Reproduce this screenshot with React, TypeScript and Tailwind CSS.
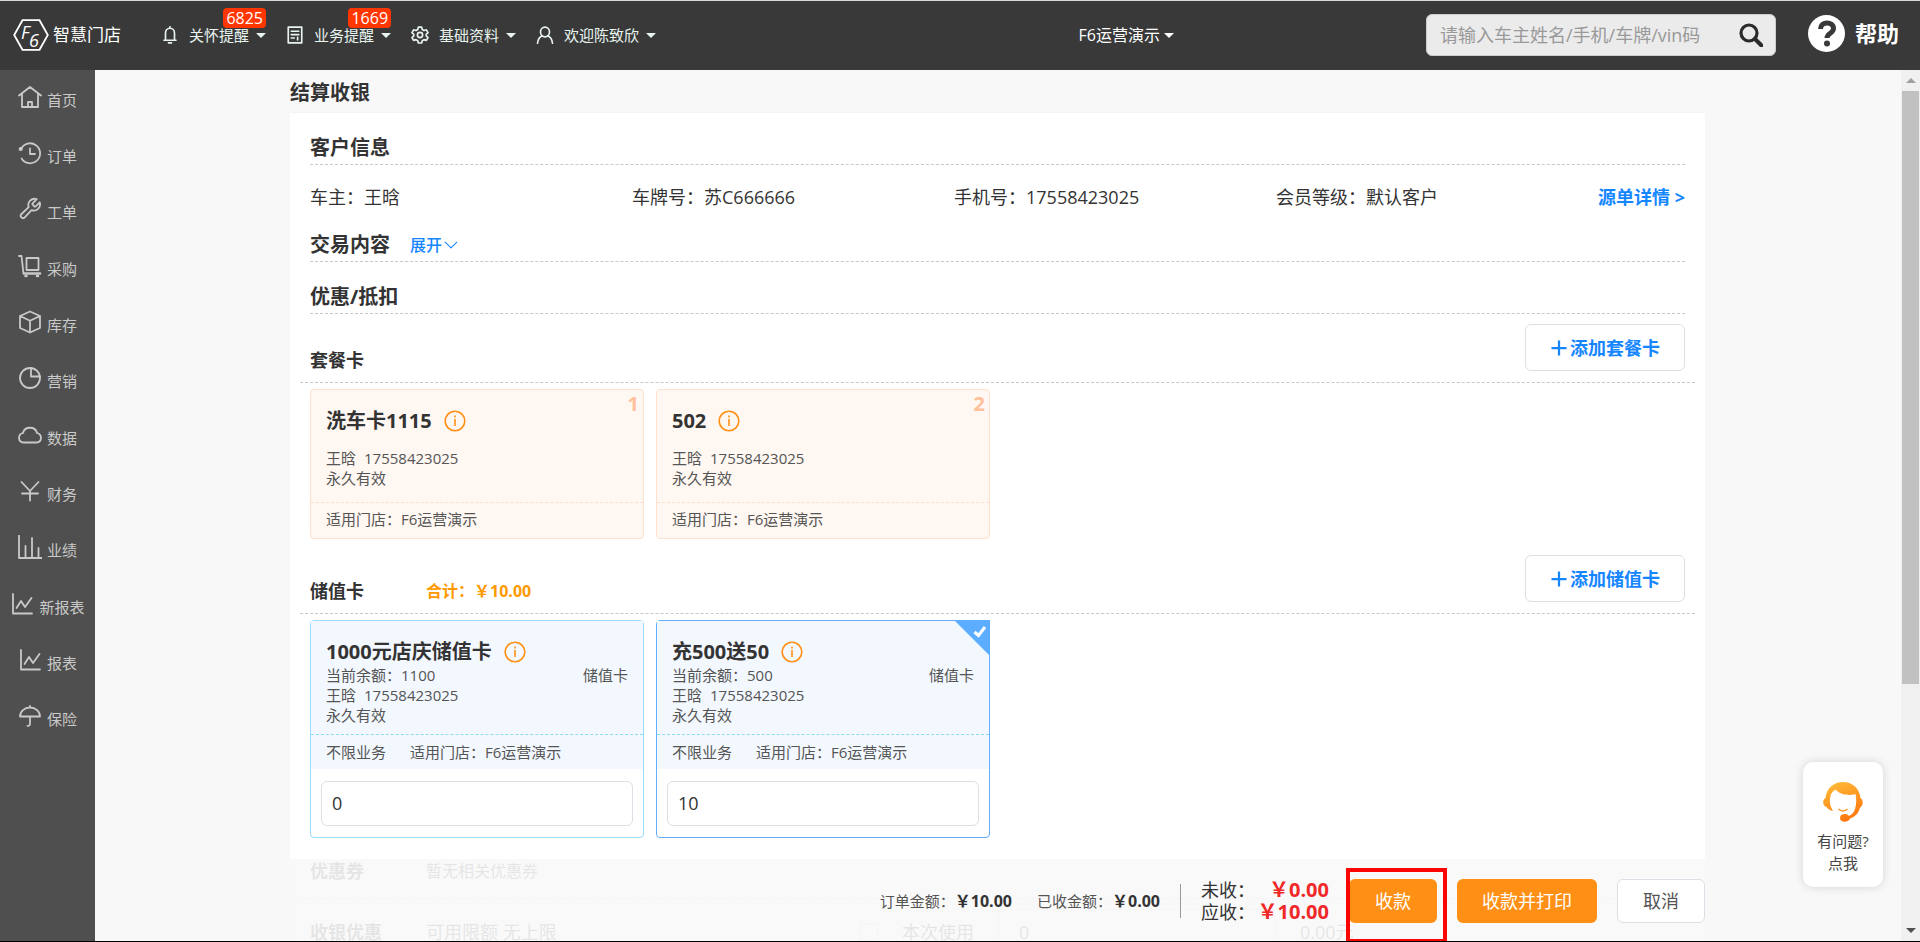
import { useState } from "react";
import type { ReactNode } from "react";

type IconProps = { children: ReactNode; className?: string; width?: number };

function Icon({ children, className = "size-6", width = 1.8 }: IconProps) {
  return (
    <svg
      viewBox="0 0 24 24"
      className={className}
      fill="none"
      stroke="currentColor"
      strokeWidth={width}
      strokeLinejoin="round"
      strokeLinecap="round"
      aria-hidden="true"
    >
      {children}
    </svg>
  );
}

const lineChart = <path d="M3 2v19.500h19M6.500 16l4.500-7 4 6 6.500-9" />;

const MENU = [
  { label: "首页", icon: <path d="M1 10.500 12 2l11 8.500M4 8.500V22h16V8.500M10 22v-5h4v5" /> },
  {
    label: "订单",
    icon: (
      <>
        <path d="M3 8.200A10 10 0 1 1 3.600 17.500M12 7.500V13h5" />
        <circle cx="2.700" cy="8" r="1.200" fill="currentColor" />
      </>
    ),
  },
  {
    label: "工单",
    icon: (
      <path d="M14.700 6.300a1 1 0 0 0 0 1.400l1.600 1.600a1 1 0 0 0 1.400 0l4-4a6.200 6.200 0 0 1-8.200 7.800L6.300 20.800a2.400 2.400 0 0 1-3.300-3.300l7.700-7.300a6.200 6.200 0 0 1 8-8z" />
    ),
  },
  {
    label: "采购",
    icon: (
      <>
        <path d="M1 2h2.500L5.500 19.500M8.500 4h12v12h-12z" />
        <path d="M6 19.500h16" strokeWidth="2.500" />
        <path d="M7.500 22h1M19 22h1" strokeWidth="2.500" />
      </>
    ),
  },
  { label: "库存", icon: <path d="M12 1.500 22 6v12l-10 4.500L2 18V6zM2 6l10 4.800L22 6M12 10.800v11.700" /> },
  {
    label: "营销",
    icon: (
      <>
        <circle cx="12" cy="12" r="10" />
        <path d="M13 2v8.500h9" />
      </>
    ),
  },
  {
    label: "数据",
    icon: <path d="M6.500 19.500c-7 0-7-8-1.500-9.500C6.500 3 17.500 3 19 10c5.500 1.500 5.500 9.500-1.500 9.500z" />,
  },
  { label: "财务", icon: <path d="m3.500 3 8.500 9 8.500-9M12 12v9.500M4 14.500h16" /> },
  { label: "业绩", icon: <path d="M1 0v23h23M7.500 11v12M14 3v20M20.500 13v10" /> },
  { label: "新报表", icon: lineChart },
  { label: "报表", icon: lineChart },
  {
    label: "保险",
    icon: <path d="M2 12.500a10 9 0 0 1 20 0zM12 2v1.500M12 12.500V20c0 1.500-1 2-2.500 1.800" />,
  },
];

const NAV = [
  {
    label: "关怀提醒",
    badge: "6825",
    icon: <path d="M6 19V9.500a6 6.500 0 0 1 12 0V19M4 19h16M12 1v2M10 22.500h4" />,
  },
  {
    label: "业务提醒",
    badge: "1669",
    icon: <path d="M3 1.500h18v21H3zM7 7h10M7 11.500h10M7 16h4M15.500 15v3.500" />,
  },
  {
    label: "基础资料",
    icon: (
      <>
        <circle cx="12" cy="12" r="3.500" />
        <path d="M9.800 1.500h4.400l.8 3.200 2.300 1.400 3.200-1 2.200 3.800-2.400 2.200v2.100l2.400 2.200-2.200 3.800-3.200-1-2.300 1.400-.8 3.100H9.800L9 19.600l-2.300-1.400-3.200 1-2.200-3.800 2.400-2.200v-2.100L1.300 8.900l2.200-3.800 3.200 1L9 4.700z" />
      </>
    ),
  },
  {
    label: "欢迎陈致欣",
    icon: (
      <>
        <ellipse cx="12" cy="8" rx="6" ry="6.500" />
        <path d="M2 23c.5-5 3-8.500 6.500-10M22 23c-.5-5-3-8.500-6.500-10" />
      </>
    ),
  },
];

function Caret() {
  return <span className="border-x-5 border-t-5 border-x-transparent border-t-current" />;
}

function Header() {
  return (
    <header className="flex h-[70px] shrink-0 items-center border-t border-[#d5d8dc] bg-[#393939] pr-[21px] pb-px pl-[13px] text-[#e8f4f0]">
      <a href="#" className="flex items-center gap-1 text-white">
        <svg viewBox="0 0 36 32" className="h-8 w-9" aria-hidden="true">
          <path
            d="M9.500 1.200h17L34.800 16l-8.300 14.800h-17L1.200 16z"
            fill="none"
            stroke="currentColor"
            strokeWidth="1.800"
          />
          <text x="8" y="20" fontSize="18" fontStyle="italic" fontWeight="500" fill="currentColor">
            F
          </text>
          <text x="16" y="28" fontSize="18" fontStyle="italic" fontWeight="500" fill="currentColor">
            6
          </text>
        </svg>
        <span className="text-[17px] leading-6">智慧门店</span>
      </a>

      <nav className="ml-10 flex items-center gap-5">
        {NAV.map((item) => (
          <button key={item.label} className="relative flex items-center text-[15px] leading-5 whitespace-nowrap">
            <Icon className="mr-[10px] size-[18px]" width={2.2}>
              {item.icon}
            </Icon>
            {item.label}
            <span className="ml-[7px] flex">
              <Caret />
            </span>
            {item.badge && (
              <span className="absolute right-0 bottom-full -mb-[3px] rounded-sm bg-[#ff3600] px-[3px] text-base leading-5 text-white">
                {item.badge}
              </span>
            )}
          </button>
        ))}
      </nav>

      <button className="mr-[252px] ml-auto flex items-center gap-1 text-base whitespace-nowrap text-white">
        F6运营演示
        <Caret />
      </button>

      <form className="flex h-[42px] w-[350px] items-center rounded-md border border-[#ccc] bg-[#ebebeb] pr-3 pl-[13px]">
        <input
          aria-label="搜索车主"
          placeholder="请输入车主姓名/手机/车牌/vin码"
          className="min-w-0 flex-1 bg-transparent text-lg outline-none placeholder:text-[#999]"
        />
        <button type="button" aria-label="搜索" className="text-[#2b2b2b]">
          <Icon width={3.2}>
            <circle cx="10" cy="10" r="8" />
            <path d="m16 16 6.500 6.500" strokeWidth="4" />
          </Icon>
        </button>
      </form>

      <a href="#" className="ml-8 flex items-center gap-[10px] pb-1 text-[22px] leading-8 font-bold whitespace-nowrap text-white">
        <svg viewBox="0 0 37 37" className="size-[37px]" aria-hidden="true">
          <circle cx="18.500" cy="18.500" r="18.500" fill="currentColor" />
          <path
            d="M12.500 14c0-8 13-8 13-.500 0 5-6.500 4.500-6.500 9.500"
            fill="none"
            stroke="#393939"
            strokeWidth="5"
          />
          <circle cx="19" cy="28.500" r="3" fill="#393939" />
        </svg>
        帮助
      </a>
    </header>
  );
}

function Sidebar() {
  return (
    <nav className="flex h-[676px] flex-col">
      {MENU.map((item) => (
        <a
          key={item.label}
          href="#"
          className="flex flex-1 items-center justify-center pb-[3px] text-[15px] leading-[18px] text-[#c9c9c9]"
        >
          <span className="flex items-end gap-[5px]">
            <Icon>{item.icon}</Icon>
            {item.label}
          </span>
        </a>
      ))}
    </nav>
  );
}

function SectionTitle({ title, children }: { title: string; children?: ReactNode }) {
  return (
    <div className="flex h-9 items-center gap-5 border-b border-dashed border-[#c8c8c8] pt-0.5">
      <h2 className="text-xl font-bold">{title}</h2>
      {children}
    </div>
  );
}

function CardGroup({
  title,
  total,
  action,
  children,
}: {
  title: string;
  total?: string;
  action: string;
  children: ReactNode;
}) {
  return (
    <section>
      <div className="-mx-[10px] flex h-[69px] items-end border-b border-dashed border-[#c8c8c8] px-[10px] pb-[11px]">
        <h3 className="w-[116px] text-lg leading-[22px] font-bold">{title}</h3>
        {total && <span className="text-base leading-[22px] font-bold text-[#ff9900]">合计：￥{total}</span>}
        <button className="ml-auto flex h-[47px] w-40 items-center justify-center gap-[2px] rounded-md border border-[#dcdfe6] bg-white text-lg font-bold text-[#1486ff]">
          <Icon className="size-[18px]" width={3}>
            <path d="M12 2v20M2 12h20" strokeLinecap="butt" />
          </Icon>
          {action}
        </button>
      </div>
      <div className="my-1.5 flex flex-wrap gap-3">{children}</div>
    </section>
  );
}

function CardTitle({ name }: { name: string }) {
  return (
    <h4 className="flex items-center gap-3 text-xl leading-[27px] font-bold">
      {name}
      <svg viewBox="0 0 22 22" className="size-[22px] text-[#ff9015]" aria-hidden="true">
        <circle cx="11" cy="11" r="9.800" fill="none" stroke="currentColor" strokeWidth="1.600" />
        <path d="M11 9v7M11 5.500v2" stroke="currentColor" strokeWidth="1.600" />
      </svg>
    </h4>
  );
}

function PackageCard({ name, index }: { name: string; index: number }) {
  return (
    <article className="relative w-[334px] rounded-sm border border-[#ffe0cc] bg-[#fff7f2] text-[15px] leading-5 text-[#555]">
      <span className="absolute top-1 right-1 text-xl leading-5 font-bold text-[#ffc09a]">{index}</span>
      <div className="h-[113px] border-b border-dashed border-[#ffe0cc] px-[15px] pt-[17px]">
        <div className="mb-[14px] text-[#333]">
          <CardTitle name={name} />
        </div>
        <p>
          王晗<span className="ml-2">17558423025</span>
        </p>
        <p>永久有效</p>
      </div>
      <p className="flex h-[35px] items-center px-[15px] pb-1">适用门店：F6运营演示</p>
    </article>
  );
}

function StoredCard({ name, balance, initial, active }: { name: string; balance: string; initial: string; active?: boolean }) {
  const [amount, setAmount] = useState(initial);

  return (
    <article
      className={`relative w-[334px] rounded-sm border text-[15px] leading-5 text-[#555] ${
        active ? "border-[#62aefb]" : "border-[#9bdcfb]"
      }`}
    >
      {active && (
        <svg viewBox="0 0 36 36" className="absolute -top-px -right-px size-9" aria-hidden="true">
          <path d="M0 0h36v36z" fill="#5cadff" />
          <path d="m20.500 12 4 3.500 6.500-8.500" fill="none" stroke="#fff" strokeWidth="3" />
        </svg>
      )}
      <div className="h-[114px] border-b border-dashed border-[#8fdcf5] bg-[#f3f8ff] px-[15px] pt-[17px]">
        <div className="text-[#333]">
          <CardTitle name={name} />
        </div>
        <p className="flex justify-between">
          <span>当前余额：{balance}</span>
          <span>储值卡</span>
        </p>
        <p>
          王晗<span className="ml-2">17558423025</span>
        </p>
        <p>永久有效</p>
      </div>
      <p className="flex h-[34px] items-center gap-6 bg-[#f3f8ff] px-[15px]">
        <span>不限业务</span>
        <span>适用门店：F6运营演示</span>
      </p>
      <div className="px-[10px] pt-3 pb-[11px]">
        <input
          aria-label={`${name}使用金额`}
          value={amount}
          onChange={(e) => setAmount(e.target.value)}
          className="block h-[45px] w-full rounded-md border border-[#dcdfe6] bg-white px-[10px] pb-0.5 text-lg text-[#333] outline-none"
        />
      </div>
    </article>
  );
}

function PayBar() {
  return (
    <div className="absolute inset-x-0 bottom-0 flex h-[82px] items-center justify-end bg-[#f8f8f8]/90 pt-0.5 whitespace-nowrap">
      <div className="flex items-center gap-[25px] text-[15px] text-[#555]">
        <span>
          订单金额：<b className="text-base text-[#333]">￥10.00</b>
        </span>
        <span>
          已收金额：<b className="text-base text-[#333]">￥0.00</b>
        </span>
      </div>
      <div className="mx-5 h-[34px] w-px bg-[#999]" />
      <dl className="grid w-[128px] grid-cols-[auto_1fr] text-lg leading-[22px]">
        <dt>未收：</dt>
        <dd className="text-right text-xl leading-[22px] font-bold text-[#f02828]">￥0.00</dd>
        <dt>应收：</dt>
        <dd className="text-right text-xl leading-[22px] font-bold text-[#f02828]">￥10.00</dd>
      </dl>
      <div className="ml-5 flex gap-5 text-lg">
        <div className="relative">
          <button className="h-11 w-[88px] rounded-md bg-[#ff9015] text-white">收款</button>
          <span className="pointer-events-none absolute -top-[11px] -right-[10px] -bottom-5 -left-[3px] border-4 border-[#fb0404]" />
        </div>
        <button className="h-11 w-[140px] rounded-md bg-[#ff9015] text-white">收款并打印</button>
        <button className="h-11 w-[88px] rounded-md border border-[#dcdfe6] bg-white text-[#555]">取消</button>
      </div>
    </div>
  );
}

function Scrollbar() {
  return (
    <div className="flex w-[19px] shrink-0 flex-col items-center bg-[#f0f0f0] py-2" aria-hidden="true">
      <span className="border-x-5 border-b-5 border-x-transparent border-b-[#a0a0a0]" />
      <span className="mt-2 h-[593px] w-[17px] bg-[#c1c1c1]" />
      <span className="mt-auto border-x-5 border-t-5 border-x-transparent border-t-[#505050]" />
    </div>
  );
}

function HelpWidget() {
  return (
    <button className="absolute right-[18px] bottom-[54px] flex h-[125px] w-20 flex-col items-center rounded-[10px] bg-white pt-5 text-[15px] leading-[22px] text-[#444] shadow-[0_0_10px_rgba(0,0,0,0.15)]">
      <svg viewBox="0 0 40 40" className="mb-2 size-10" aria-hidden="true">
        <defs>
          <linearGradient id="agent" x1="0" y1="0" x2="0.400" y2="1">
            <stop offset="0" stopColor="#ffc03a" />
            <stop offset="1" stopColor="#ff7a10" />
          </linearGradient>
        </defs>
        <path
          d="M2.500 16C3.500 6 11 0 20 0s16.500 6 17.500 16c3 1.500 3 8-.500 9.500-1 5-4.500 9-10 11-1.500 4.500-10 4.500-10-.500 0-4.500 6.500-5 9-2 3-1.300 5-3.500 6-7 1.500-5 1.500-10 .500-15-6 2-15 1-20-4.500C10 9 8 11 7.500 14c-1.500 6-.500 10 2.500 15-3-.500-5-2-6.500-4C-.500 24-1 18 2.500 16z"
          fill="url(#agent)"
        />
        <path d="M15.500 27c2.500 2.500 6.500 2.500 9 0" fill="none" stroke="#ff9a2a" strokeWidth="1.500" />
      </svg>
      <span>有问题?</span>
      <span>点我</span>
    </button>
  );
}

export default function App() {
  return (
    <div
      lang="zh-CN"
      className="relative flex h-screen flex-col overflow-hidden border-b border-black bg-[#f8f8f8] text-[#333] [font-family:'Open_Sans','Noto_Sans_CJK_SC',sans-serif]"
    >
      <Header />
      <div className="flex min-h-0 flex-1">
        <aside className="w-[95px] shrink-0 bg-[#4f4f4f]">
          <Sidebar />
        </aside>

        <main className="min-w-0 flex-1 overflow-hidden pr-px">
          <div className="relative mx-auto h-full max-w-[1415px] overflow-hidden">
            <h1 className="flex h-[43px] items-center pt-0.5 text-xl font-bold">结算收银</h1>

            <div className="bg-white px-5 pt-4 shadow-sm">
              <SectionTitle title="客户信息" />
              <div className="grid h-[61px] grid-cols-[repeat(4,1fr)_auto] items-center pt-0.5 text-lg">
                <span>车主：王晗</span>
                <span>车牌号：苏C666666</span>
                <span>手机号：17558423025</span>
                <span>会员等级：默认客户</span>
                <a href="#" className="font-bold text-[#1486ff]">
                  源单详情 &gt;
                </a>
              </div>

              <SectionTitle title="交易内容">
                <button className="flex items-center gap-[2px] text-base font-medium text-[#1486ff]">
                  展开
                  <Icon className="size-[14px]">
                    <path d="m2 7 10 10L22 7" />
                  </Icon>
                </button>
              </SectionTitle>
              <div className="mt-4">
                <SectionTitle title="优惠/抵扣" />
              </div>

              <CardGroup title="套餐卡" action="添加套餐卡">
                <PackageCard name="洗车卡1115" index={1} />
                <PackageCard name="502" index={2} />
              </CardGroup>

              <CardGroup title="储值卡" total="10.00" action="添加储值卡">
                <StoredCard name="1000元店庆储值卡" balance="1100" initial="0" />
                <StoredCard name="充500送50" balance="500" initial="10" active />
              </CardGroup>

              <div className="-mx-[10px] flex h-[55px] items-center border-b border-dashed border-[#c8c8c8] px-[10px]">
                <h3 className="w-[116px] text-lg font-bold">优惠券</h3>
                <span className="text-base">暂无相关优惠券</span>
              </div>
              <div className="flex h-[66px] items-center text-lg">
                <h3 className="w-[116px] font-bold">收银优惠</h3>
                <span>可用限额 无上限</span>
                <label className="ml-auto flex items-center gap-6">
                  <input type="checkbox" className="size-[18px] appearance-none border border-[#c8c8c8]" />
                  本次使用
                </label>
                <input
                  aria-label="收银优惠金额"
                  defaultValue="0"
                  className="mr-6 ml-6 h-[46px] w-[278px] rounded-md border border-[#dcdfe6] px-5 outline-none"
                />
                <span className="w-[385px]">0.00元</span>
              </div>
            </div>

            <PayBar />
          </div>
        </main>

        <Scrollbar />
      </div>
      <div className="absolute inset-y-0 right-[19px] w-0">
        <HelpWidget />
      </div>
    </div>
  );
}
